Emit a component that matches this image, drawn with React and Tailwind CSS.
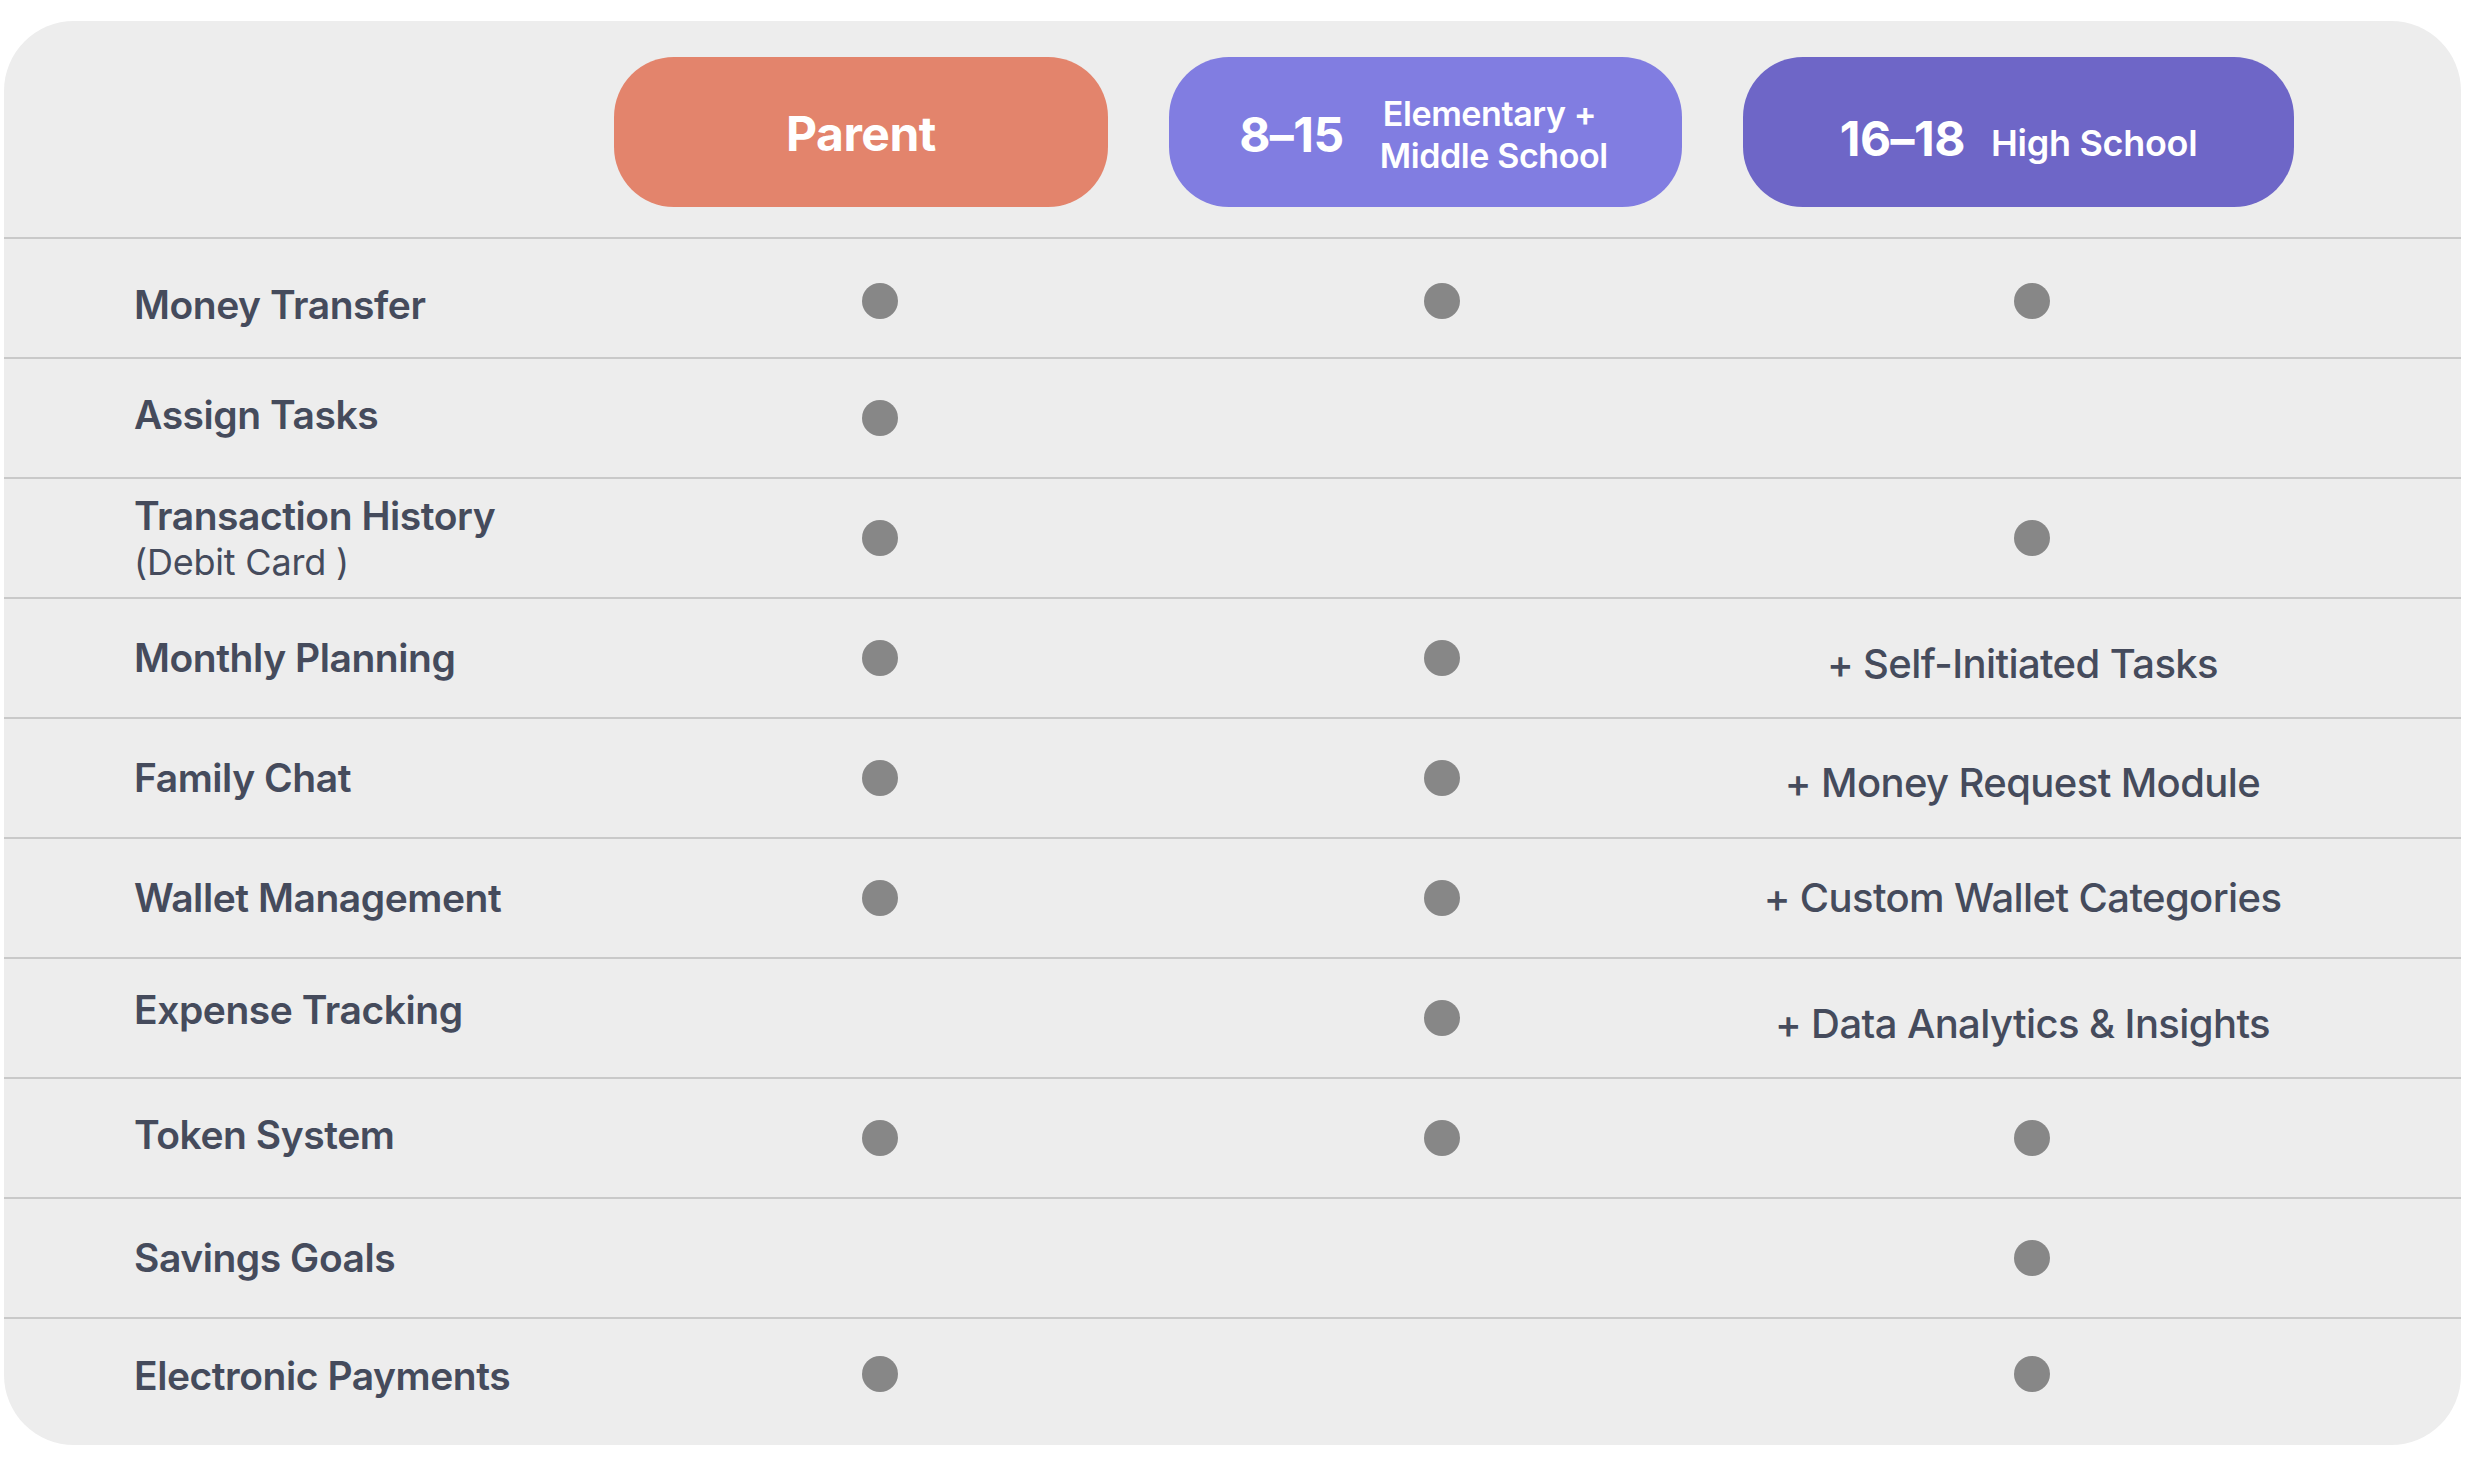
import React from "react";

const rows = [
  { label: "Money Transfer", cells: [true, true, true], labelShift: "translate-y-[7px]", dotShift: "translate-y-[3px]" },
  { label: "Assign Tasks", cells: [true, false, false], labelShift: "-translate-y-[3px]" },
  { label: "Transaction History", sub: "(Debit Card )", cells: [true, false, true] },
  { label: "Monthly Planning", cells: [true, true, "+ Self-Initiated Tasks"], textShift: "translate-y-[6px]" },
  { label: "Family Chat", cells: [true, true, "+ Money Request Module"], textShift: "translate-y-[5px]" },
  { label: "Wallet Management", cells: [true, true, "+ Custom Wallet Categories"] },
  { label: "Expense Tracking", cells: [false, true, "+ Data Analytics & Insights"], labelShift: "-translate-y-[8px]", textShift: "translate-y-[6px]" },
  { label: "Token System", cells: [true, true, true], labelShift: "-translate-y-[3px]" },
  { label: "Savings Goals", cells: [false, false, true] },
  { label: "Electronic Payments", cells: [true, false, true], labelShift: "-translate-y-[2px]", dotShift: "-translate-y-[4px]" },
];

// dots sit a little right of the pill centres
const dotPad = ["pl-[38px]", "pl-[32px]", "pl-[26px]"];

const gridCols = "grid grid-cols-[549px_494px_513px_551px_1fr] gap-x-[61px]";

const Dot = () => <span className="block w-[36px] h-[36px] rounded-full bg-[#878787]" />;

const Cell = ({ value, index, textShift = "", dotShift = "" }) => {
  if (typeof value === "string") {
    return (
      <div className={`flex justify-center pl-[8px] text-[40px] font-medium tracking-[-0.6px] text-[#454b5c] ${textShift}`}>
        {value}
      </div>
    );
  }
  return <div className={`flex justify-center ${dotPad[index]} ${dotShift}`}>{value && <Dot />}</div>;
};

export default function App() {
  return (
    <div
      className="min-h-screen bg-white pl-[4px] pr-[7px] pt-[21px] pb-[22px]"
      style={{ fontFamily: "Inter, 'Noto Sans', sans-serif" }}
    >
      <div className="bg-[#ededed] rounded-[70px] overflow-hidden pb-[8px]">
        {/* header pills */}
        <div className={`${gridCols} pt-[36px] pb-[30px]`}>
          <div />
          <div className="h-[150px] rounded-[60px] bg-[#e3846c] flex items-center justify-center pt-[4px]">
            <span className="text-[48px] font-bold text-white tracking-[-0.5px]">Parent</span>
          </div>
          <div className="h-[150px] rounded-[60px] bg-[#817de1] flex items-center justify-center gap-[36px] pt-[5px] pr-[4px]">
            <span className="text-[48px] font-bold text-white tracking-[-0.5px]">8–15</span>
            <span className="text-[34px] leading-[42px] font-semibold text-white text-left tracking-[-0.4px]">
              <span className="block pl-[3px]">Elementary +</span>
              <span className="block">Middle School</span>
            </span>
          </div>
          <div className="h-[150px] rounded-[60px] bg-[#6e66c7] flex items-baseline justify-center gap-[26px] pt-[58px]">
            <span className="text-[48px] font-bold text-white tracking-[-0.5px] leading-none">16–18</span>
            <span className="text-[36px] font-semibold text-white tracking-[-0.3px] leading-none">High School</span>
          </div>
          <div />
        </div>

        {rows.map((row) => (
          <div
            key={row.label}
            className={`${gridCols} h-[120px] items-center border-t-2 border-[#c9c9c9]`}
          >
            <div className={`pl-[130px] text-[#454b5c] ${row.labelShift || ""}`}>
              <div className="text-[39px] font-semibold leading-[48px] tracking-[-0.45px]">{row.label}</div>
              {row.sub && <div className="text-[36px] font-normal leading-[44px] tracking-[-0.2px]">{row.sub}</div>}
            </div>
            {row.cells.map((c, i) => (
              <Cell key={i} value={c} index={i} textShift={row.textShift} dotShift={row.dotShift} />
            ))}
            <div />
          </div>
        ))}
      </div>
    </div>
  );
}
